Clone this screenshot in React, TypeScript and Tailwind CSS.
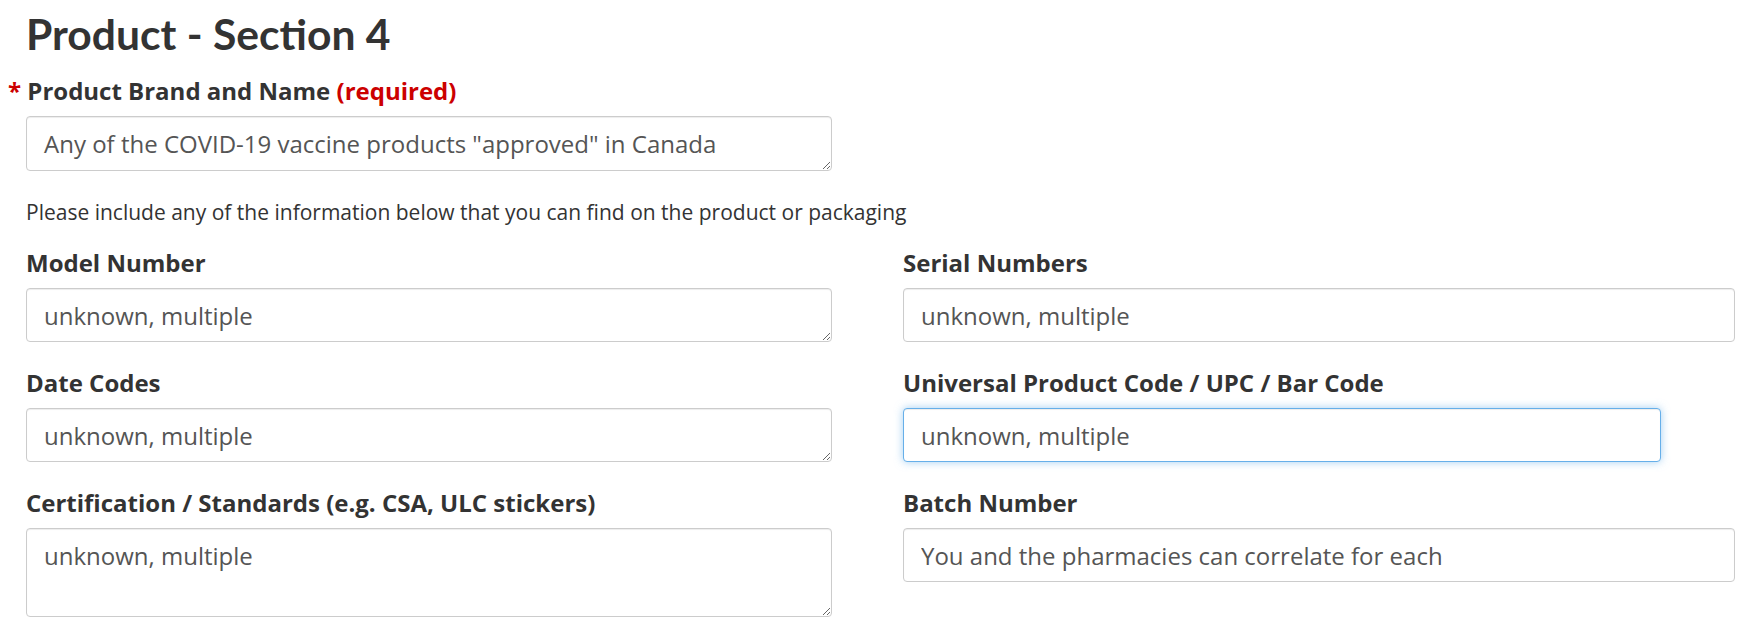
import { useEffect, useRef } from "react";

const label = "block text-[24px] leading-[30px] font-bold text-[#333] mb-[10px]";
const field =
  "block border rounded-[4px] bg-white px-[17px] text-[24px] text-[#555] outline-none";
const idle = "border-[#ccc] shadow-[inset_0_1px_1px_rgba(0,0,0,0.075)]";
const active =
  "border-[#66afe9] shadow-[inset_0_1px_1px_rgba(0,0,0,0.075),0_0_8px_rgba(102,175,233,0.6)]";

const Field = ({
  title,
  value,
  area,
  tall,
  focused,
}: {
  title: string;
  value: string;
  area?: boolean;
  tall?: boolean;
  focused?: boolean;
}) => {
  const ref = useRef<HTMLInputElement>(null);
  useEffect(() => {
    if (focused && ref.current) {
      ref.current.focus();
      const n = ref.current.value.length;
      ref.current.setSelectionRange(n, n);
    }
  }, [focused]);
  return (
    <div>
      <label className={label}>{title}</label>
      {area ? (
        <textarea
          defaultValue={value}
          className={`${field} ${idle} w-full pt-[10px] leading-[33px] ${tall ? "h-[89px]" : "h-[54px]"}`}
        />
      ) : (
        <input
          ref={ref}
          type="text"
          defaultValue={value}
          className={`${field} h-[54px] ${focused ? `${active} w-[758px]` : `${idle} w-full`}`}
        />
      )}
    </div>
  );
};

export default function App() {
  return (
    <div className="min-h-screen bg-white pl-[26px] pr-[2px] font-['Open_Sans',sans-serif]">
      <h1 className="font-['Lato',sans-serif] font-bold text-[42.6px] leading-[52px] text-[#333] pt-[8px]">
        Product - Section 4
      </h1>
      <div className="w-[806px] mt-[16px]">
        <label className={`${label} -ml-[18px]`}>
          <span className="text-[#c00]">*</span> Product Brand and Name{" "}
          <span className="text-[#c00]">(required)</span>
        </label>
        <textarea
          defaultValue={'Any of the COVID-19 vaccine products "approved" in Canada'}
          className={`${field} ${idle} w-full pt-[10px] leading-[33px] h-[55px]`}
        />
      </div>
      <p className="text-[21px] leading-[28px] text-[#333] mt-[27px]">
        Please include any of the information below that you can find on the product or packaging
      </p>
      <div className="grid grid-cols-[806px_832px] gap-x-[71px] gap-y-[26px] mt-[22px]">
        <Field title="Model Number" value="unknown, multiple" area />
        <Field title="Serial Numbers" value="unknown, multiple" />
        <Field title="Date Codes" value="unknown, multiple" area />
        <Field title="Universal Product Code / UPC / Bar Code" value="unknown, multiple" focused />
        <Field title="Certification / Standards (e.g. CSA, ULC stickers)" value="unknown, multiple" area tall />
        <Field title="Batch Number" value="You and the pharmacies can correlate for each" />
      </div>
    </div>
  );
}
